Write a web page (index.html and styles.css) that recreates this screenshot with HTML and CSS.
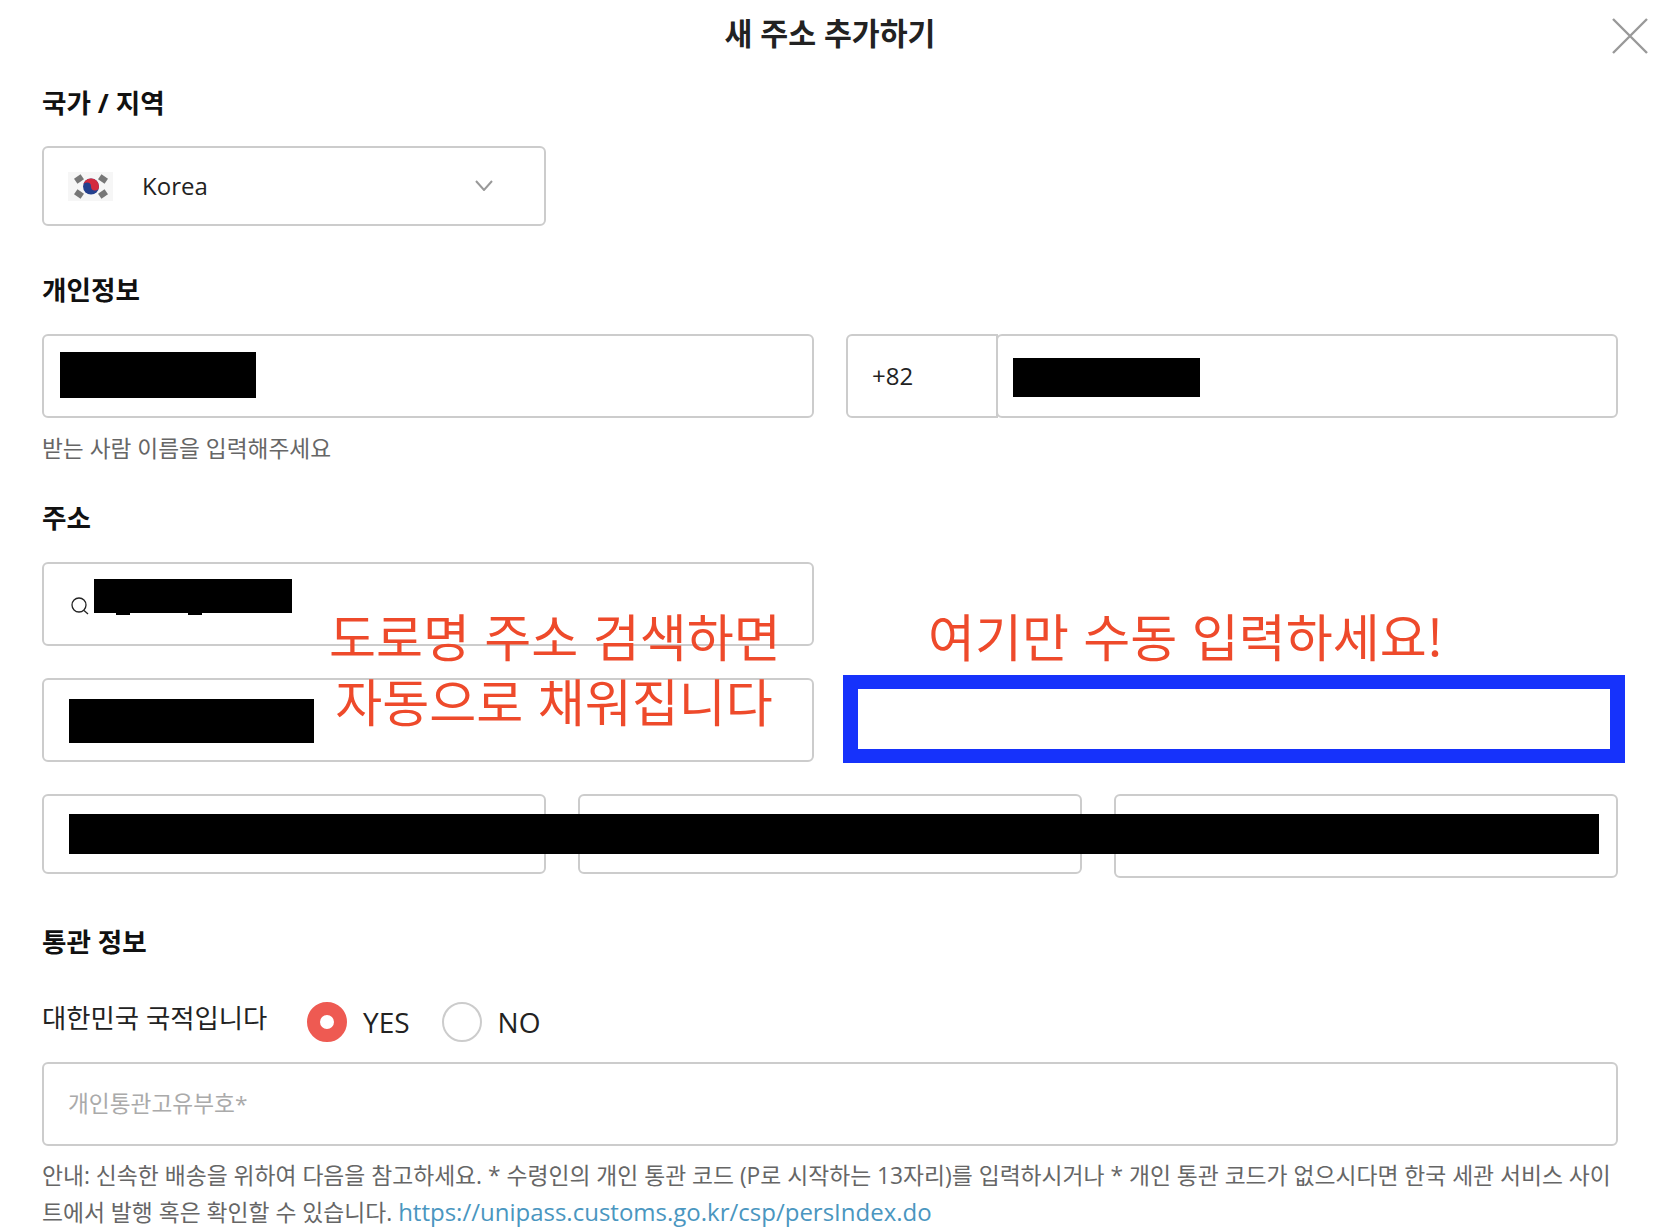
FILE: index.html
```html
<!DOCTYPE html>
<html lang="ko">
<head>
<meta charset="utf-8">
<title>새 주소 추가하기</title>
<link rel="stylesheet" href="styles.css">
</head>
<body>
<main class="dialog">
  <h1 class="title">새 주소 추가하기</h1>
  <svg class="close" viewBox="0 0 36 36" aria-label="close"><path d="M1 1L35 35M35 1L1 35"/></svg>

  <h2 class="label label-country">국가 / 지역</h2>
  <div class="field half select">
    <svg class="flag" viewBox="0 0 45 29">
      <rect width="45" height="29" fill="#f6f6f6"/>
      <g fill="#777">
        <rect x="7" y="4" width="8" height="6" transform="rotate(-35 11 7)"/>
        <rect x="31" y="4" width="8" height="6" transform="rotate(35 35 7)"/>
        <rect x="7" y="19" width="8" height="6" transform="rotate(35 11 22)"/>
        <rect x="31" y="19" width="8" height="6" transform="rotate(-35 35 22)"/>
      </g>
      <circle cx="23" cy="14.5" r="8" fill="#24408e"/>
      <path d="M15 14.5a8 8 0 0 1 16 0a4 4 0 0 1-8 0a4 4 0 0 0-8 0z" fill="#d32a3e"/>
    </svg>
    <span class="value">Korea</span>
    <svg class="chevron" viewBox="0 0 18 11"><path d="M1 1L9 10L17 1"/></svg>
  </div>

  <h2 class="label label-person">개인정보</h2>
  <div class="row">
    <div class="field wide"><i class="redact redact-name"></i></div>
    <div class="phone">
      <div class="field prefix"><span class="value">+82</span></div>
      <div class="field number"><i class="redact redact-phone"></i></div>
    </div>
  </div>
  <p class="hint">받는 사람 이름을 입력해주세요</p>

  <h2 class="label label-address">주소</h2>
  <div class="field wide search">
    <svg class="search-icon" viewBox="0 0 20 18"><circle cx="9" cy="8" r="7"/><path d="M14 13.5L18 17"/></svg>
    <i class="redact redact-search"></i>
    <i class="redact bump bump-a"></i>
    <i class="redact bump bump-b"></i>
  </div>
  <div class="row row-address">
    <div class="field wide"><i class="redact redact-road"></i></div>
    <div class="manual"></div>
  </div>
  <div class="row row-three">
    <div class="field third short"></div>
    <div class="field third short"></div>
    <div class="field third tall"></div>
    <i class="redact redact-region"></i>
  </div>

  <h2 class="label label-customs">통관 정보</h2>
  <div class="nation">
    <span class="nation-text">대한민국 국적입니다</span>
    <span class="radio on"></span><span class="radio-text">YES</span>
    <span class="radio"></span><span class="radio-text">NO</span>
  </div>
  <input class="field code" type="text" placeholder="개인통관고유부호*">
  <p class="note">안내: 신속한 배송을 위하여 다음을 참고하세요. * 수령인의 개인 통관 코드 (P로 시작하는 13자리)를 입력하시거나 * 개인 통관 코드가 없으시다면 한국 세관 서비스 사이<br>트에서 발행 혹은 확인할 수 있습니다. <a class="link" href="#">https://unipass.customs.go.kr/csp/persIndex.do</a></p>

  <div class="callout callout-auto">도로명 주소 검색하면<span class="callout-line">자동으로 채워집니다</span></div>
  <div class="callout callout-manual">여기만 수동 입력하세요!</div>
</main>
</body>
</html>
```

FILE: styles.css
```css
* { box-sizing: border-box; }
html, body { margin: 0; background: #fff; }
body {
  font-family: "Open Sans", "Noto Sans CJK KR", sans-serif;
  color: #111;
}
.dialog {
  position: relative;
  width: 1660px;
  height: 1230px;
  padding: 0 42px;
  overflow: hidden;
}
.title {
  margin: 0;
  height: 68px;
  font-size: 30.3px;
  line-height: 68px;
  font-weight: 700;
  text-align: center;
  color: #222;
}
.close {
  position: absolute;
  left: 1612px;
  top: 18px;
  width: 36px;
  height: 36px;
}
.close path { fill: none; stroke: #999; stroke-width: 2.4; }
.label {
  margin: 0;
  height: 30px;
  font-size: 26.6px;
  line-height: 30px;
  font-weight: 700;
  color: #111;
}
.label-country { margin: 20px 0 28px; }
.label-person { margin: 49px 0 29px; }
.label-address { margin: 39px 0 29px; }
.label-customs { margin: 49px 0 0; }
.field {
  position: relative;
  display: flex;
  align-items: center;
  height: 84px;
  border: 2px solid #ccc;
  border-radius: 6px;
  background: #fff;
}
.half { width: 504px; }
.wide { width: 772px; }
.select { height: 80px; padding-left: 24px; }
.flag { width: 45px; height: 29px; filter: blur(0.6px); }
.select .value { margin: -2px 0 0 29px; }
.value { font-size: 24px; color: #222; }
.prefix .value { margin-top: -2px; }
.chevron { margin: -2px 0 0 267px; width: 18px; height: 11px; }
.chevron path { fill: none; stroke: #999; stroke-width: 2; }
.row { position: relative; display: flex; }
.phone { display: flex; margin-left: 32px; }
.prefix {
  width: 152px;
  padding-left: 24px;
  border-radius: 6px 0 0 6px;
}
.number { width: 622px; margin-left: -2px; }
.hint {
  margin: 16px 0 0;
  font-size: 22.7px;
  line-height: 30px;
  color: #666;
}
.search { margin-bottom: 32px; }
.search-icon {
  position: absolute;
  left: 26px;
  top: 33px;
  width: 20px;
  height: 18px;
}
.search-icon circle, .search-icon path { fill: none; stroke: #222; stroke-width: 1.3; }
.redact { position: absolute; background: #000; }
.redact-name { left: 16px; top: 16px; width: 196px; height: 46px; }
.redact-phone { left: 15px; top: 22px; width: 187px; height: 39px; }
.redact-search { left: 50px; top: 15px; width: 198px; height: 34px; }
.bump { top: 49px; height: 2px; width: 14px; }
.bump-a { left: 72px; }
.bump-b { left: 144px; }
.redact-road { left: 25px; top: 19px; width: 245px; height: 44px; }
.manual {
  width: 782px;
  height: 88px;
  margin: -3px -7px 0 29px;
  border-style: solid;
  border-width: 14px 15px;
  border-color: #1632fb;
  background: #fff;
}
.row-address { margin-bottom: 31px; }
.row-three { justify-content: space-between; align-items: flex-start; }
.third { width: 504px; }
.short { height: 80px; }
.tall { height: 84px; }
.redact-region { left: 27px; top: 20px; width: 1530px; height: 40px; }
.nation {
  display: flex;
  align-items: center;
  height: 40px;
  margin-top: 45px;
}
.nation-text { width: 265px; font-size: 26.4px; line-height: 34px; margin-top: -8px; color: #222; }
.radio {
  width: 40px;
  height: 40px;
  border: 2px solid #ccc;
  border-radius: 50%;
  background: #fff;
}
.radio.on { border: 13px solid #ee5a52; }
.radio-text { margin: 0 32px 0 16px; font-size: 28px; line-height: 40px; color: #222; }
.code {
  display: block;
  width: 100%;
  margin-top: 20px;
  padding: 0 24px 2px;
  font-family: inherit;
  font-size: 22.7px;
  outline: none;
}
.code::placeholder { color: #aaa; opacity: 1; }
.note {
  margin: 12px 0 0;
  font-size: 22.8px;
  line-height: 36px;
  color: #666;
  white-space: nowrap;
}
.link { font-size: 24px; color: #4a96c0; text-decoration: none; }
.callout {
  position: absolute;
  font-family: "Noto Sans CJK KR", sans-serif;
  font-size: 51.1px;
  font-weight: 400;
  line-height: 65px;
  color: #ee4a2b;
  text-align: center;
  white-space: nowrap;
}
.callout-auto { left: 329px; top: 603px; width: 446px; }
.callout-line { display: block; padding-left: 4px; }
.callout-manual { left: 928px; top: 603px; }
```
